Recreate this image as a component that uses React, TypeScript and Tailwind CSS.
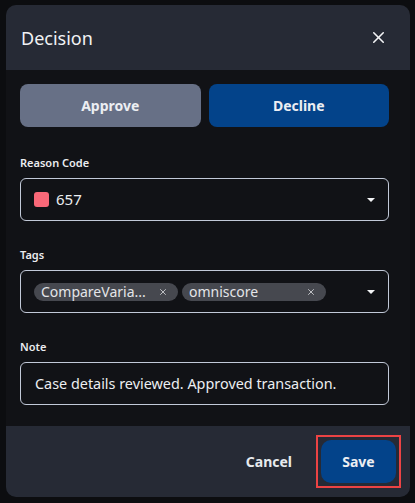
import { X } from 'lucide-react'

function Chevron() {
  return (
    <svg width="10" height="6" viewBox="0 0 10 6" className="shrink-0">
      <path d="M1 1 L9 1 L5 5 Z" fill="#f3f4f6" />
    </svg>
  )
}

function Chip({ label }: { label: string }) {
  return (
    <div className="flex h-[18px] w-[144px] items-center justify-between rounded-full bg-[#46484f] pl-[7px] pr-[10px]">
      <span className="whitespace-nowrap text-[14px] leading-none text-[#e4e5e8]">{label}</span>
      <X size={10} strokeWidth={2} className="shrink-0 text-[#d6d7db]" />
    </div>
  )
}

function Field({ label, children }: { label: string; children: React.ReactNode }) {
  return (
    <div className="flex flex-col">
      <div className="mb-[7px] h-4 text-[11px] font-semibold leading-4 text-[#ebecef]">{label}</div>
      {children}
    </div>
  )
}

export default function App() {
  return (
    <div
      className="h-[503px] w-[415px] overflow-hidden bg-[#0c0d10] pl-[6px] pt-[5px]"
      style={{ fontFamily: '"Noto Sans", "Open Sans", sans-serif' }}
    >
      <div className="flex h-[492px] w-[404px] flex-col overflow-hidden rounded-[10px] bg-[#111216]">
        {/* Header */}
        <div className="flex h-[65px] shrink-0 items-center justify-between bg-[#262a35] pl-[15px] pr-[20px]">
          <h2 className="text-[18px] font-normal leading-none text-[#f1f2f4]">Decision</h2>
          <button className="flex h-6 w-6 items-center justify-center text-[#f3f4f6]" aria-label="Close">
            <X size={19} strokeWidth={2} />
          </button>
        </div>

        {/* Body */}
        <div className="flex flex-1 flex-col pl-[14px] pr-[21px] pt-[14px]">
          <div className="grid grid-cols-2 gap-[8px]">
            <button className="h-[43px] rounded-[8px] bg-[#677086] text-[14px] font-bold text-[#eceef2]">
              Approve
            </button>
            <button className="h-[43px] rounded-[8px] bg-[#03438a] text-[14px] font-bold text-[#eceef2]">
              Decline
            </button>
          </div>

          <div className="mt-[28px] flex flex-col gap-[26px]">
            <Field label="Reason Code">
              <div className="flex h-[43px] items-center rounded-[6px] border border-[#c2c9d8] pl-[13px] pr-[12px]">
                <span className="h-[15px] w-[15px] rounded-[3px] bg-[#f96878]" />
                <span className="ml-[7px] flex-1 text-[15px] text-[#eceef1]">657</span>
                <Chevron />
              </div>
            </Field>

            <Field label="Tags">
              <div className="flex h-[43px] items-center rounded-[6px] border border-[#c2c9d8] pl-[13px] pr-[12px]">
                <div className="flex flex-1 gap-[4px]">
                  <Chip label="CompareVaria..." />
                  <Chip label="omniscore" />
                </div>
                <Chevron />
              </div>
            </Field>

            <Field label="Note">
              <div className="flex h-[43px] items-center rounded-[6px] border border-[#c2c9d8] px-[14px]">
                <span className="text-[14.4px] text-[#eceef1]">Case details reviewed. Approved transaction.</span>
              </div>
            </Field>
          </div>
        </div>

        {/* Footer */}
        <div className="flex h-[71px] shrink-0 items-center justify-end gap-[12px] bg-[#262a35] pr-[9px]">
          <button className="px-3 text-[14px] font-bold text-[#e8eaee]">Cancel</button>
          <div className="border-2 border-[#ec4344] p-[3px]">
            <button className="h-[43px] w-[75px] rounded-[10px] bg-[#03438a] text-[14px] font-bold text-[#eceef2]">
              Save
            </button>
          </div>
        </div>
      </div>
    </div>
  )
}
